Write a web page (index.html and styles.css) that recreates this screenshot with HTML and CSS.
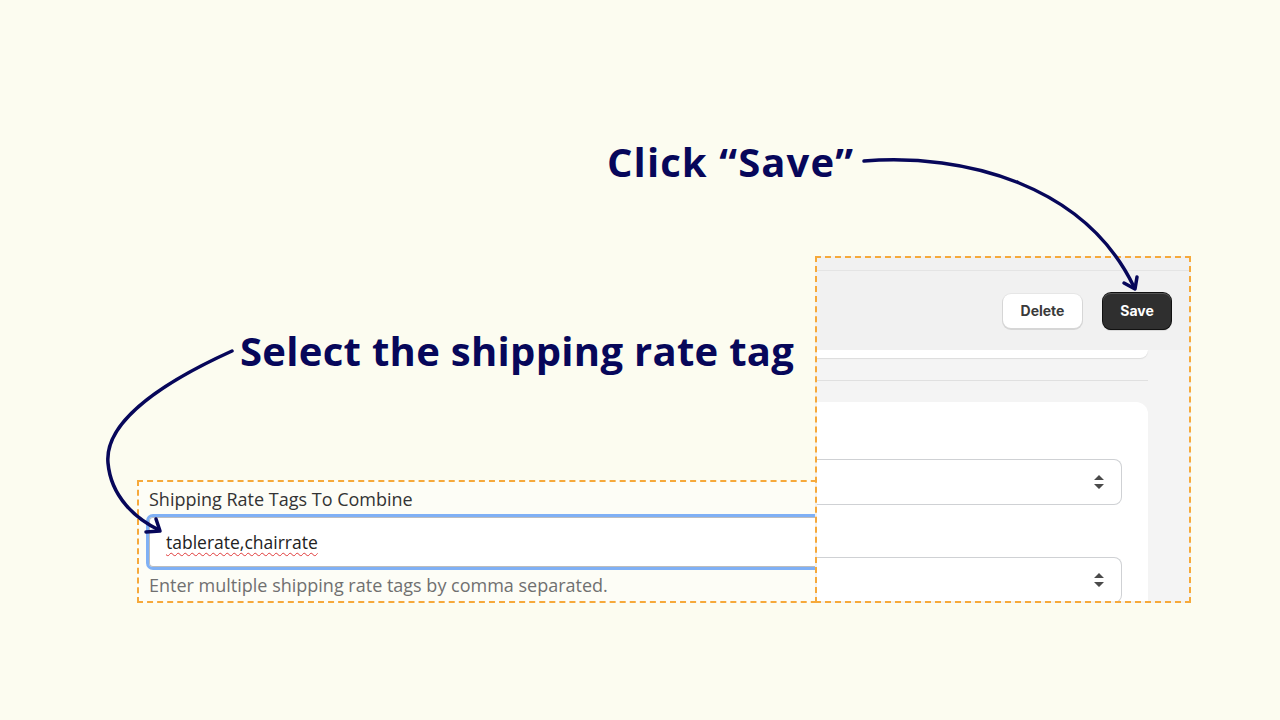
FILE: index.html
```html
<!DOCTYPE html>
<html>
<head>
  <title>Combine shipping rates</title>
  <link rel="stylesheet" href="styles.css">
</head>
<body>
  <div id="stage">
    <div class="callout callout-save">Click &ldquo;Save&rdquo;</div>
    <div class="callout callout-tag">Select the shipping rate tag</div>

    <div class="shot shot-field">
      <div class="field-label">Shipping Rate Tags To Combine</div>
      <div class="field-input"><span class="typo">tablerate,chairrate</span></div>
      <div class="field-help">Enter multiple shipping rate tags by comma separated.</div>
    </div>

    <div class="shot shot-save">
      <div class="top-strip"></div>
      <div class="action-bar">
        <div class="btn btn-plain">Delete</div>
        <div class="btn btn-dark">Save</div>
      </div>
      <div class="page-body">
        <div class="card card-end"></div>
        <div class="divider"></div>
        <div class="card card-start">
          <div class="select">
            <svg width="12" height="18" viewBox="0 0 12 18"><path d="M6 2 L11 7 H1 Z M1 11 H11 L6 16 Z" fill="#4a4a4a"/></svg>
          </div>
          <div class="select">
            <svg width="12" height="18" viewBox="0 0 12 18"><path d="M6 2 L11 7 H1 Z M1 11 H11 L6 16 Z" fill="#4a4a4a"/></svg>
          </div>
        </div>
      </div>
    </div>

    <svg class="arrows" width="1280" height="720" viewBox="0 0 1280 720">
      <g fill="none" stroke="#07075a" stroke-width="3.5" stroke-linecap="round" stroke-linejoin="round">
        <path d="M864 161 C965 153, 1085 185, 1134 287"/>
        <polyline points="1124,283 1135,289 1137,277"/>
        <path d="M232 351 C168 380, 104 420, 108 463 C111 497, 136 519, 159 530"/>
        <polyline points="156,519 160,531 146,532"/>
      </g>
    </svg>
  </div>
</body>
</html>
```

FILE: styles.css
```css
body {
    margin: 0;
    background-color: #fcfcf0;
    font-family: "Open Sans", sans-serif;
    }

#stage {
    position: relative;
    width: 1280px;
    height: 720px;
    overflow: hidden;
    }

/* annotation text */
.callout {
    position: absolute;
    z-index: 2;
    font-family: "Open Sans", sans-serif;
    font-weight: 700;
    font-size: 40px;
    line-height: 48px;
    letter-spacing: 0.3px;
    color: #07075a;
    white-space: nowrap;
    }

.callout-save {
    left: 607px;
    top: 138px;
    letter-spacing: 1.1px;
    }

.callout-tag {
    left: 240px;
    top: 327px;
    }

.arrows {
    position: absolute;
    left: 0;
    top: 0;
    z-index: 2;
    pointer-events: none;
    }

/* screenshot crops on the canvas */
.shot {
    position: absolute;
    box-sizing: border-box;
    border: 2px dashed #f6a93a;
    overflow: hidden;
    }

.shot-field {
    left: 137px;
    top: 480px;
    width: 720px;
    height: 123px;
    padding: 5px 0 0 10px;
    background-color: #fdfdf6;
    font-family: "Open Sans", sans-serif;
    }

.field-label {
    font-size: 18px;
    color: #333;
    line-height: 24px;
    }

.field-input {
    box-sizing: border-box;
    margin: 3px 0 0 -3px;
    height: 56px;
    border: 3px solid #7fb0f5;
    border-radius: 7px;
    box-shadow: inset 0 0 0 1px #bdbdbd;
    background-color: #fff;
    display: flex;
    align-items: center;
    padding-left: 17px;
    padding-bottom: 1px;
    font-size: 17.5px;
    color: #222;
    }

.typo {
    text-decoration: underline wavy #e03a3a;
    text-decoration-thickness: 1px;
    text-underline-offset: 3px;
    }

.field-help {
    margin-top: 3px;
    font-size: 18px;
    color: #707070;
    line-height: 24px;
    }

.shot-save {
    left: 815px;
    top: 256px;
    width: 376px;
    height: 347px;
    background-color: #f1f1f1;
    font-family: Inter, sans-serif;
    z-index: 1;
    }

.top-strip {
    height: 12px;
    border-bottom: 1px solid #e4e4e4;
    }

.action-bar {
    height: 79px;
    display: flex;
    justify-content: flex-end;
    align-items: center;
    gap: 21px;
    padding-right: 18px;
    }

.btn {
    display: flex;
    align-items: center;
    justify-content: center;
    font-size: 14px;
    font-weight: 650;
    border-radius: 8px;
    }

.btn-plain {
    width: 79px;
    height: 34px;
    background-color: #fff;
    color: #3a3a3a;
    box-shadow: 0 1px 0 1px #d6d6d6, 0 0 0 1px #e6e6e6;
    }

.btn-dark {
    width: 68px;
    height: 36px;
    background-color: #2f2f2f;
    color: #fff;
    font-weight: 700;
    box-shadow: inset 0 1px 0 #555, 0 0 0 1px #111, 0 1px 1px #000;
    }

.page-body {
    background-color: #f4f4f4;
    padding-right: 41px;
    height: 300px;
    }

.card {
    background-color: #fff;
    }

.card-end {
    height: 8px;
    border-radius: 0 0 12px 0;
    box-shadow: 0 1px 1px #dcdcdc;
    }

.divider {
    margin-top: 22px;
    border-top: 1px solid #e0e0e0;
    }

.card-start {
    margin-top: 21px;
    height: 260px;
    border-radius: 0 12px 0 0;
    padding: 57px 26px 0 0;
    display: flex;
    flex-direction: column;
    gap: 52px;
    }

.select {
    height: 44px;
    border: 1px solid #cfd1d4;
    border-left: none;
    border-radius: 0 8px 8px 0;
    display: flex;
    align-items: center;
    justify-content: flex-end;
    padding-right: 16px;
    }
```
